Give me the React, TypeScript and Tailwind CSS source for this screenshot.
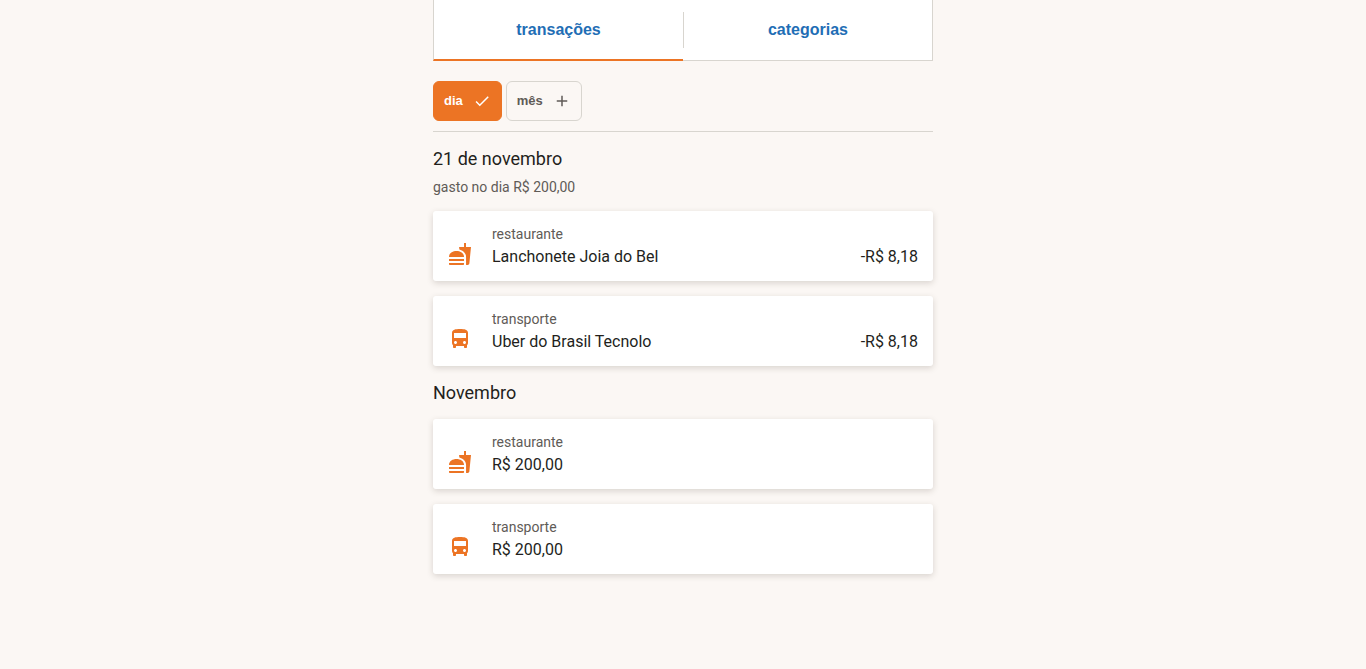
import { useState } from "react";
import { MdAdd, MdCheck, MdDirectionsBus, MdFastfood } from "react-icons/md";
import type { IconType } from "react-icons";

type Entry = {
  icon: IconType;
  category: string;
  title: string;
  amount?: string;
};

const dayEntries: Entry[] = [
  { icon: MdFastfood, category: "restaurante", title: "Lanchonete Joia do Bel", amount: "-R$ 8,18" },
  { icon: MdDirectionsBus, category: "transporte", title: "Uber do Brasil Tecnolo", amount: "-R$ 8,18" },
];

const monthEntries: Entry[] = [
  { icon: MdFastfood, category: "restaurante", title: "R$ 200,00" },
  { icon: MdDirectionsBus, category: "transporte", title: "R$ 200,00" },
];

const tabs = ["transações", "categorias"];
const filters = ["dia", "mês"];

function EntryList({ entries }: { entries: Entry[] }) {
  return (
    <ul className="flex flex-col gap-[15px]">
      {entries.map(({ icon: Icon, category, title, amount }) => (
        <li
          key={category}
          className="flex items-end rounded-[3px] bg-white px-[15px] pt-[13px] pb-3 shadow-[0_2px_6px_rgba(60,50,40,0.18)]"
        >
          <Icon size={24} className="mr-5 mb-[3px] shrink-0 text-[#ec7424]" aria-hidden="true" />
          <div className="min-w-0 flex-1">
            <p className="text-sm leading-5 text-[#605b57]">{category}</p>
            <p className="mt-px text-base leading-6">{title}</p>
          </div>
          {amount && <p className="text-base leading-6">{amount}</p>}
        </li>
      ))}
    </ul>
  );
}

export default function App() {
  const [tab, setTab] = useState("transações");
  const [filter, setFilter] = useState("dia");

  return (
    <div className="min-h-screen bg-[#fbf7f4] pb-10 font-['Roboto',sans-serif] text-[#231f1c]">
      <main className="mx-auto w-full max-w-[500px]">
        <nav className="grid grid-cols-2 bg-white font-['Liberation_Sans',sans-serif]">
          {tabs.map((name, index) => (
            <button
              key={name}
              type="button"
              aria-pressed={tab === name}
              onClick={() => setTab(name)}
              className={`flex border-[#d8d5cf] pt-3 text-base font-bold text-[#1f6eb5] ${
                index === 0 ? "border-l" : "border-r"
              } ${tab === name ? "border-b-2 border-b-[#ec7424] pb-[11px]" : "border-b pb-3"}`}
            >
              <span
                className={`flex h-9 flex-1 items-center justify-center ${
                  index === 0 ? "" : "border-l border-[#d8d5cf]"
                }`}
              >
                {name}
              </span>
            </button>
          ))}
        </nav>

        <div className="mt-5 flex gap-1 border-b border-[#d8d5cf] pb-2.5 font-['Liberation_Sans',sans-serif]">
          {filters.map((name) => {
            const active = filter === name;
            const Icon = active ? MdCheck : MdAdd;
            return (
              <button
                key={name}
                type="button"
                aria-pressed={active}
                onClick={() => setFilter(name)}
                className={`flex h-10 items-center gap-2.5 rounded-md border px-2.5 text-[13px] leading-4 font-bold ${
                  active
                    ? "border-[#ec7424] bg-[#ec7424] text-white"
                    : "border-[#d8d5cf] text-[#605b57]"
                }`}
              >
                {name}
                <Icon size={18} aria-hidden="true" />
              </button>
            );
          })}
        </div>

        <section>
          <h2 className="mt-[13px] text-lg leading-7">21 de novembro</h2>
          <p className="mt-1 mb-3.5 text-sm leading-5 text-[#605b57]">gasto no dia R$ 200,00</p>
          <EntryList entries={dayEntries} />
        </section>

        <section>
          <h2 className="mt-[13px] mb-3 text-lg leading-7">Novembro</h2>
          <EntryList entries={monthEntries} />
        </section>
      </main>
    </div>
  );
}
